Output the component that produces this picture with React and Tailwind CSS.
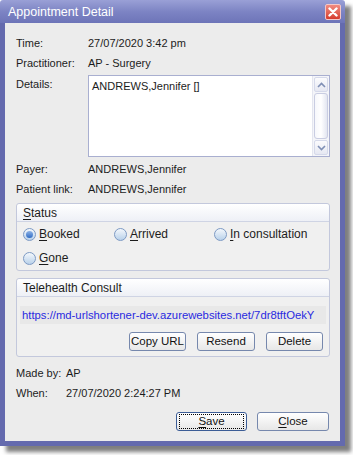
import React from "react";

const font = { fontFamily: '"Liberation Sans", Arial, sans-serif' };

const U = ({ children }) => <span className="underline underline-offset-2">{children}</span>;

const Radio = ({ checked, children }) => (
  <div className="flex items-center gap-[3px]">
    <span className="relative inline-flex h-[13px] w-[13px] items-center justify-center rounded-full border border-[#7d9ac4] bg-gradient-to-b from-[#f4f8fc] to-[#b9d1ea]">
      {checked && (
        <span className="h-[7px] w-[7px] rounded-full bg-gradient-to-b from-[#8fb4e6] to-[#2e6bc4]" />
      )}
    </span>
    <span className="text-[12px]">{children}</span>
  </div>
);

const Button = ({ children, className = "", focus }) => (
  <button
    className={
      "flex h-[19px] items-center justify-center whitespace-nowrap rounded-[3px] border bg-gradient-to-b from-white to-[#e7e7e7] text-[11.5px] text-[#111] " +
      (focus ? "border-[#3c5d96] " : "border-[#7688ad] ") +
      className
    }
  >
    {focus ? (
      <span className="flex h-[15px] w-[calc(100%-4px)] items-center justify-center border border-dotted border-black">
        {children}
      </span>
    ) : (
      children
    )}
  </button>
);

const Row = ({ label, value, w = "w-[72px]" }) => (
  <div className="flex h-[20px] items-center whitespace-nowrap">
    <span className={w}>{label}</span>
    <span>{value}</span>
  </div>
);

const Chevron = ({ up }) => (
  <svg width="9" height="6" viewBox="0 0 9 6">
    <path
      d={up ? "M1 5 L4.5 1.5 L8 5" : "M1 1 L4.5 4.5 L8 1"}
      fill="none"
      stroke="#7f8fb5"
      strokeWidth="1.6"
    />
  </svg>
);

const GroupHeader = ({ children }) => (
  <div className="flex h-[18px] items-center border-b border-[#cfd4e4] bg-gradient-to-b from-white to-[#eef0f6] px-[6px] rounded-t-[3px] text-[12px]">
    {children}
  </div>
);

export default function App() {
  return (
    <div className="h-[455px] w-[353px] bg-white text-[11px] text-[#1c1c1c]" style={font}>
      <div className="flex h-[446px] w-[345px] flex-col shadow-[6px_6px_4px_rgba(0,0,0,0.5)]">
        <div className="flex h-[23px] items-center justify-between bg-gradient-to-b from-[#9aa0d6] via-[#7d84c4] to-[#6d74b8] pl-[8px] pr-[4px] rounded-t-[3px]">
          <span className="pt-[1px] text-[12.5px] text-white">Appointment Detail</span>
          <span className="flex h-[16px] w-[16px] items-center justify-center rounded-[2px] border border-[#f3c7c7] bg-gradient-to-b from-[#f08a80] to-[#d53a2c]">
            <svg width="10" height="10" viewBox="0 0 10 10">
              <path d="M1.5 1.5 L8.5 8.5 M8.5 1.5 L1.5 8.5" stroke="white" strokeWidth="2.4" strokeLinecap="round" />
            </svg>
          </span>
        </div>
        <div className="flex flex-1 flex-col border-x-[5px] border-b-[5px] border-[#646aae] bg-[#ececec] pl-[11px] pr-[10px] pt-[10px]">
          <Row label="Time:" value="27/07/2020 3:42 pm" />
          <Row label="Practitioner:" value="AP - Surgery" />
          <div className="mt-[2px] flex">
            <span className="w-[72px] pt-[1px]">Details:</span>
            <div className="flex h-[82px] flex-1 border border-[#a9afd0] bg-white">
              <div className="flex-1 px-[3px] pt-[2px]">ANDREWS,Jennifer []</div>
              <div className="flex w-[17px] flex-col border-l border-[#e4e6f0] bg-[#f4f5f9] p-[1px]">
                <div className="flex h-[15px] items-center justify-center rounded-[2px] border border-[#d5d9ea] bg-gradient-to-b from-[#fbfbfd] to-[#e6e8f2]">
                  <Chevron up />
                </div>
                <div className="my-[1px] flex-1 rounded-[3px] border border-[#c9cde2] bg-gradient-to-r from-[#f6f7fb] via-white to-[#e3e6f1]" />
                <div className="flex h-[15px] items-center justify-center rounded-[2px] border border-[#d5d9ea] bg-gradient-to-b from-[#fbfbfd] to-[#e6e8f2]">
                  <Chevron />
                </div>
              </div>
            </div>
          </div>
          <div className="mt-[2px]">
            <Row label="Payer:" value="ANDREWS,Jennifer" />
            <Row label="Patient link:" value="ANDREWS,Jennifer" />
          </div>
          <div className="mt-[4px] h-[68px] rounded-[3px] border border-[#c3c8dc] bg-[#f0f0f0]">
            <GroupHeader>
              <span>
                <U>S</U>tatus
              </span>
            </GroupHeader>
            <div className="grid grid-cols-[91px_100px_1fr] pl-[6px]">
              <div className="flex h-[24px] items-center">
                <Radio checked><U>B</U>ooked</Radio>
              </div>
              <div className="flex h-[24px] items-center">
                <Radio><U>A</U>rrived</Radio>
              </div>
              <div className="flex h-[24px] items-center">
                <Radio><U>I</U>n consultation</Radio>
              </div>
              <div className="flex h-[24px] items-center">
                <Radio><U>G</U>one</Radio>
              </div>
            </div>
          </div>
          <div className="mt-[7px] h-[79px] rounded-[3px] border border-[#c3c8dc] bg-[#f0f0f0]">
            <GroupHeader>Telehealth Consult</GroupHeader>
            <div className="mx-[3px] mt-[9px] flex h-[18px] items-center whitespace-nowrap bg-[#e8e8e8] px-[2px] text-[11.3px] text-[#2a2ae0]">
              https://md-urlshortener-dev.azurewebsites.net/7dr8tftOekY
            </div>
            <div className="mt-[8px] flex justify-end gap-[11px] pr-[6px]">
              <Button className="w-[57px]">Copy URL</Button>
              <Button className="w-[58px]">Resend</Button>
              <Button className="w-[57px]">Delete</Button>
            </div>
          </div>
          <div className="mt-[6px]">
            <Row label="Made by:" value="AP" w="w-[50px]" />
            <Row label="When:" value="27/07/2020 2:24:27 PM" w="w-[50px]" />
          </div>
          <div className="mt-[9px] flex justify-end gap-[10px] pr-[1px]">
            <Button className="w-[71px]" focus>
              <span>
                <U>S</U>ave
              </span>
            </Button>
            <Button className="w-[72px]">
              <span>
                <U>C</U>lose
              </span>
            </Button>
          </div>
        </div>
      </div>
    </div>
  );
}
